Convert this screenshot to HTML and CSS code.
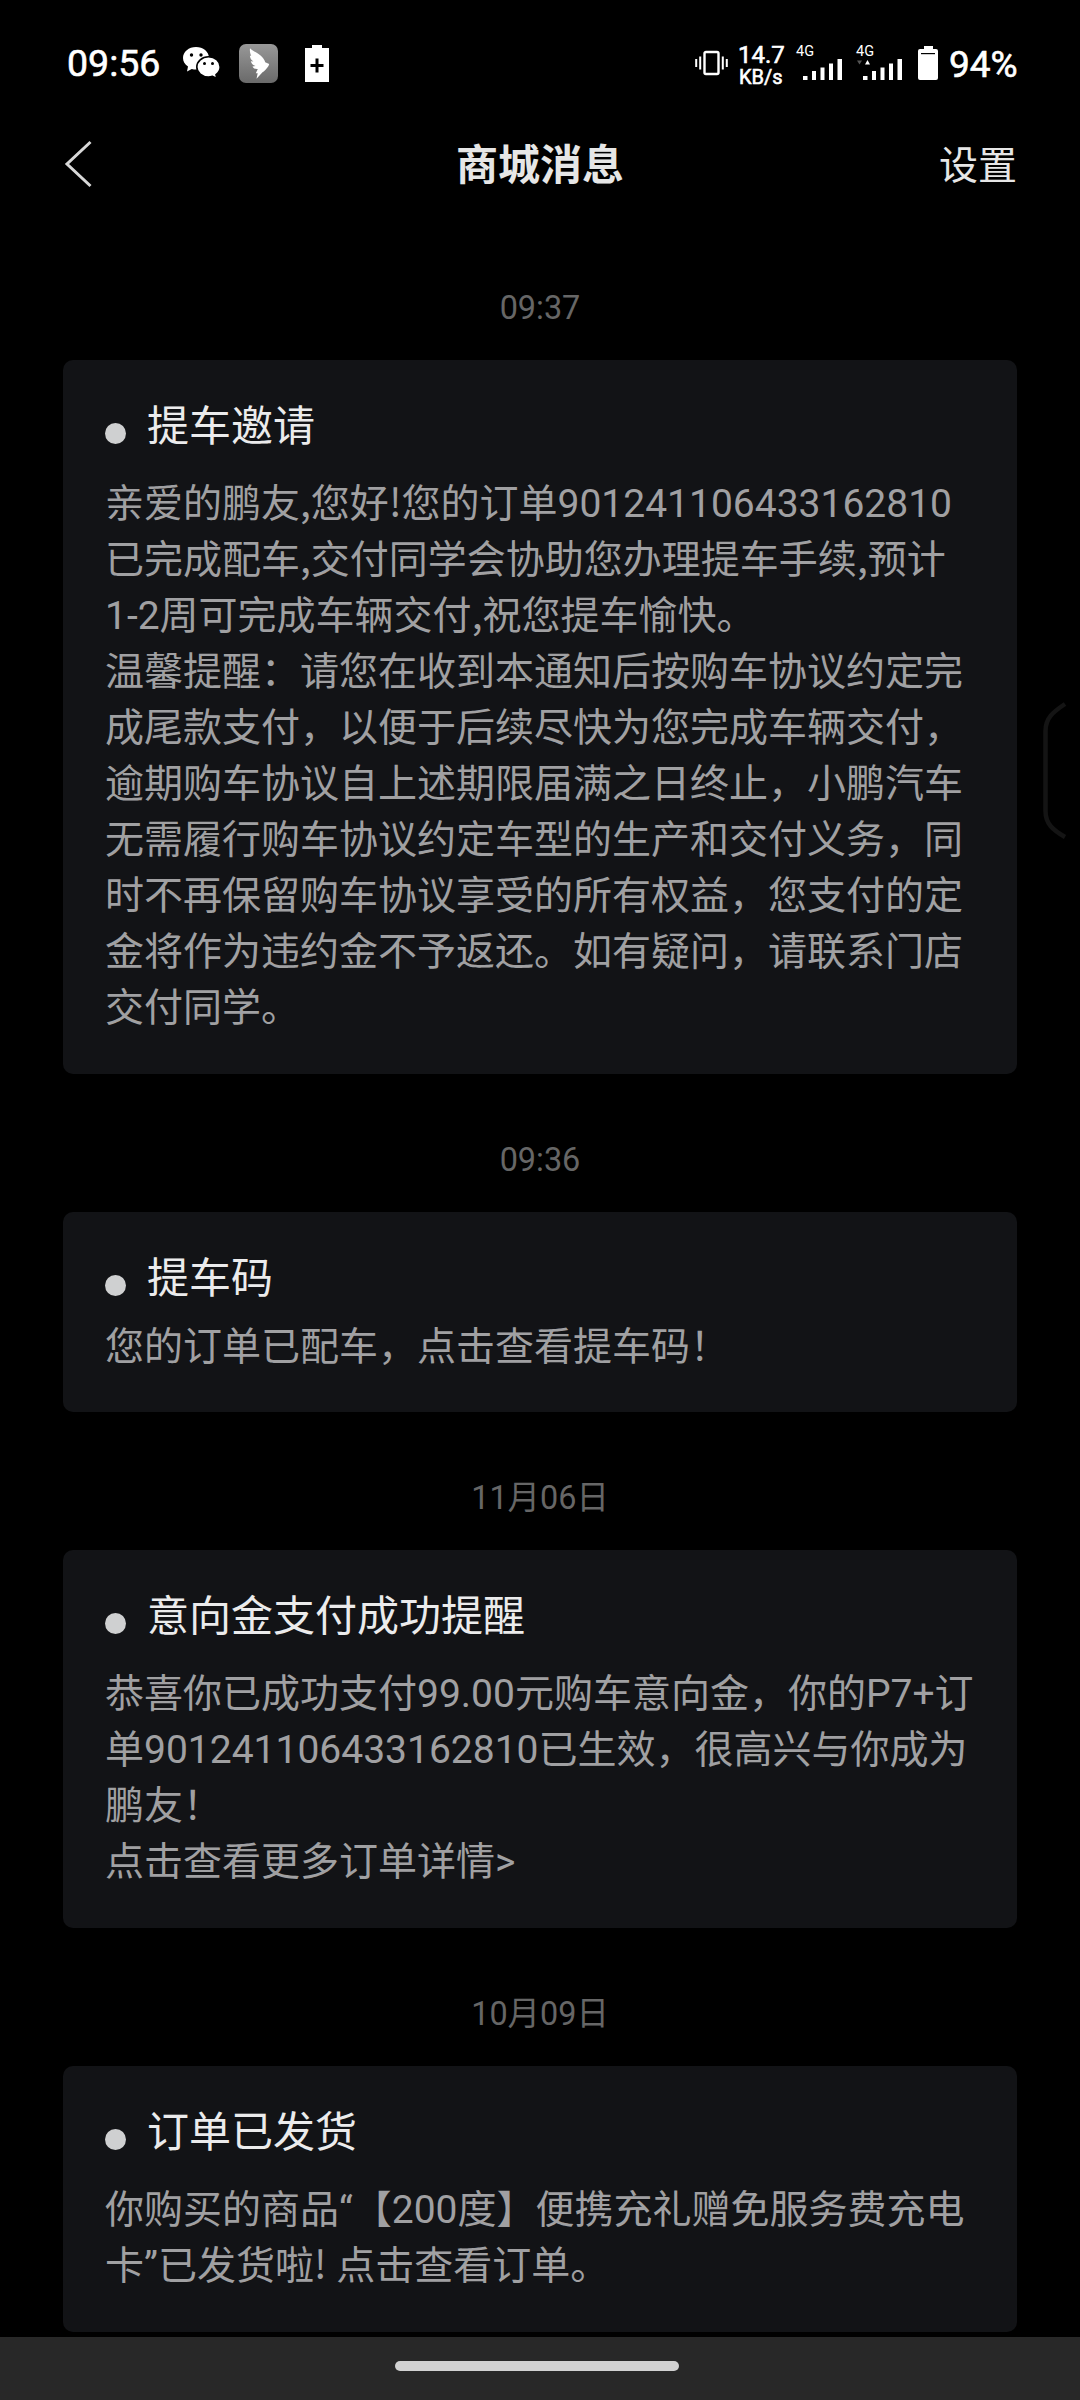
FILE: index.html
```html
<!DOCTYPE html>
<html lang="zh-CN">
<head>
<meta charset="utf-8">
<title>商城消息</title>
<link rel="stylesheet" href="styles.css">
</head>
<body>
<div class="screen">
  <div class="status">
    <span class="clock">09:56</span>
    <svg class="wechat" width="38" height="32" viewBox="0 0 38 32">
      <path fill="#fff" d="M13 0C5.800 0 0 4.800 0 11c0 3.400 1.800 6.400 5 8.600L4 24.500l4.800-2.600c1.400.4 2.800.6 4.200.6C20 22.500 26 17.500 26 11S20 0 13 0z"/>
      <path fill="#fff" stroke="#000" stroke-width="1.600" d="M25.500 9.800c6.500 0 11.700 4.500 11.700 10.200 0 3.200-1.700 5.700-4.200 7.600l.8 3.900-4.300-2.200c-1.300.4-2.600.7-4 .7-6.500 0-11.700-4.500-11.700-10S19 9.800 25.500 9.800z"/>
      <circle cx="8.500" cy="8" r="1.700"/><circle cx="18" cy="8" r="1.700"/>
      <circle cx="21.500" cy="16.500" r="1.500"/><circle cx="29.500" cy="16.500" r="1.500"/>
    </svg>
    <svg class="ding" width="39" height="39" viewBox="0 0 39 39">
      <defs><linearGradient id="g" x1="0" y1="0" x2="0" y2="1"><stop offset="0" stop-color="#989898"/><stop offset="1" stop-color="#6a6a6a"/></linearGradient></defs>
      <rect width="39" height="39" rx="7" fill="url(#g)"/>
      <path fill="#fff" d="M11 4.300C14.500 8 20 9 24 14c1.500 2 2 3.500 2.200 4.300L30.200 20c-.5 2.500-3 5-5.500 7.500l-1.200.8L17.500 34.800l1.200-5.600h-1.900l2-4.200c-2.500.2-4.300-.6-5.300-2.500l3-.4c-2.500-.8-4.200-2.500-4.700-4.800l2.600.2c-2.200-1.500-3.400-3.500-3.500-6l1.300.4C10.900 9 10.700 6.500 11 4.300z"/>
    </svg>
    <svg class="saver" width="24" height="37" viewBox="0 0 24 37">
      <path fill="#fff" d="M7 0h10v3h7v34H0V3h7z"/><path d="M10.500 13.500h3v5.500h5v3h-5v5.500h-3V22h-5v-3h5z"/>
    </svg>
    <div class="status-right">
      <svg class="vibrate" width="33" height="26" viewBox="0 0 33 26">
        <rect x="9.500" y="2" width="14" height="22" rx="1.500" fill="none" stroke="#fff" stroke-width="2.400"/>
        <path stroke="#fff" stroke-width="2" d="M1.200 9v8M5.200 6.500v13M27.800 6.500v13M31.800 9v8"/>
      </svg>
      <div class="speed"><span class="rate">14.7</span><span class="unit">KB/s</span></div>
      <div class="signal"><span>4G</span>
        <svg width="40" height="21" viewBox="0 0 40 21"><path fill="#fff" d="M0 17h4.500v4H0zM9 12h4v9H9zM17.500 8.500h4V21h-4zM26 4.500h4V21h-4zM34.500 0H39v21h-4.500z"/></svg>
      </div>
      <div class="signal"><span>4G</span>
        <svg width="47" height="21" viewBox="0 0 47 21"><path fill="#fff" d="M7 17h4.500v4H7zM16 12h4v9h-4zM24.500 8.500h4V21h-4zM33 4.500h4V21h-4zM41.500 0H46v21h-4.500zM9 5.500h5L11.500 1z"/><path fill="#555" d="M1 1.500h5L3.500 5.500z"/></svg>
      </div>
      <svg class="battery" width="20" height="34" viewBox="0 0 20 34">
        <path fill="#fff" d="M6 0h9v3h3a2 2 0 0 1 2 2v27a2 2 0 0 1-2 2H2a2 2 0 0 1-2-2V5a2 2 0 0 1 2-2h4z"/><path d="M3 7h14v1.200H3z"/>
      </svg>
      <span class="percent">94%</span>
    </div>
  </div>

  <header class="header">
    <svg class="back" width="30" height="48" viewBox="0 0 30 48"><path d="M27.500 2 4 24l23.500 22" fill="none" stroke="#d8d8d8" stroke-width="3"/></svg>
    <h1>商城消息</h1>
    <span class="settings">设置</span>
  </header>

  <main class="list">
    <div class="time">09:37</div>
    <section class="card">
      <h2><i class="dot"></i>提车邀请</h2>
      <p>亲爱的鹏友<span class="punct">,</span>您好<span class="punct">!</span>您的订单901241106433162810<br>已完成配车<span class="punct">,</span>交付同学会协助您办理提车手续<span class="punct">,</span>预计<br>1-2周可完成车辆交付<span class="punct">,</span>祝您提车愉快。<br>温馨提醒：请您在收到本通知后按购车协议约定完成尾款支付，以便于后续尽快为您完成车辆交付，逾期购车协议自上述期限届满之日终止，小鹏汽车无需履行购车协议约定车型的生产和交付义务，同时不再保留购车协议享受的所有权益，您支付的定金将作为违约金不予返还。如有疑问，请联系门店交付同学。</p>
    </section>
    <div class="time">09:36</div>
    <section class="card single">
      <h2><i class="dot"></i>提车码</h2>
      <p>您的订单已配车，点击查看提车码！</p>
    </section>
    <div class="time">11月06日</div>
    <section class="card">
      <h2><i class="dot"></i>意向金支付成功提醒</h2>
      <p>恭喜你已成功支付99.00元购车意向金，你的P7+订<br>单901241106433162810已生效，很高兴与你成为<br>鹏友！<br>点击查看更多订单详情&gt;</p>
    </section>
    <div class="time">10月09日</div>
    <section class="card">
      <h2><i class="dot"></i>订单已发货</h2>
      <p>你购买的商品“【200度】便携充礼赠免服务费充电<br>卡”已发货啦<span class="punct">!</span> 点击查看订单。</p>
    </section>
  </main>

  <footer class="navbar"><div class="pill"></div></footer>
  <svg class="edge" width="28" height="140" viewBox="0 0 28 140"><path d="M24 3C12 11 4.500 17 4.500 30v80c0 13 7.500 19 19.500 26" fill="none" stroke="#141414" stroke-width="4.500"/></svg>
</div>
</body>
</html>
```
FILE: styles.css
```css
* { box-sizing: border-box; }
body {
  margin: 0;
  background: #000;
  font-family: Roboto, "Noto Sans CJK SC", sans-serif;
  text-spacing-trim: space-all;
  text-autospace: no-autospace;
}
svg { display: block; flex: none; }
.screen {
  position: relative;
  display: flex;
  flex-direction: column;
  width: 1080px;
  height: 2400px;
  overflow: hidden;
}

.status {
  display: flex;
  align-items: center;
  height: 126px;
  padding: 0 63px 0 67px;
  color: #fff;
  -webkit-text-stroke: 0.6px #fff;
}
.clock { font-size: 37.500px; width: 116px; }
.wechat { margin-right: 18px; }
.ding { margin-right: 27px; }
.status-right { display: flex; align-items: center; margin-left: auto; }
.vibrate { margin-right: 10px; }
.speed { display: flex; flex-direction: column; width: 58px; padding-top: 3px; }
.rate { font-size: 24px; line-height: 24px; }
.unit { font-size: 20px; line-height: 20px; margin-left: 1px; }
.signal { display: flex; flex-direction: column; width: 60px; height: 36px; }
.signal span { font-size: 14.500px; line-height: 14px; -webkit-text-stroke: 0; }
.signal svg { margin-left: 7px; }
.signal + .signal svg { margin-left: 0; }
.battery { margin: 0 11px 0 2px; }
.percent { font-size: 37px; width: 68px; padding-top: 2px; white-space: nowrap; }

.header {
  display: grid;
  grid-template-columns: 1fr auto 1fr;
  align-items: center;
  height: 76px;
  padding: 0 63px;
  color: #e6e6e6;
}
.header h1 { margin: 0; padding-top: 3px; font-size: 42px; line-height: 60px; font-weight: 700; }
.settings { justify-self: end; padding-top: 3px; font-size: 39px; line-height: 60px; }

.list { flex: 1; padding: 20px 63px 0; }
.time {
  height: 138px;
  padding-top: 66px;
  text-align: center;
  font-size: 32.400px;
  line-height: 40px;
  color: #666;
}
.card {
  padding: 37px 40px 38px 42px;
  border-radius: 10px;
  background: #121316;
}
.card h2 {
  display: flex;
  align-items: center;
  gap: 21px;
  margin: 0 0 19px;
  font-size: 42px;
  line-height: 60px;
  font-weight: 400;
  color: #ebebec;
}
.dot {
  width: 21px;
  height: 21px;
  margin-top: 12px;
  border-radius: 50%;
  background: #cfd0d1;
}
.card p { margin: 0; font-size: 39px; line-height: 56px; color: #a0a0a2; }
.punct { font-family: "Noto Sans CJK SC", sans-serif; line-height: 1; }
.single { padding-bottom: 42px; }
.single h2 { margin-bottom: 15px; }
.single p { line-height: 46px; }

.navbar {
  display: flex;
  justify-content: center;
  height: 63px;
  padding: 24px 6px 0 0;
  background: #282828;
}
.pill { width: 284px; height: 10px; border-radius: 5px; background: #d2d2d2; }
.edge { position: absolute; left: 1041px; top: 701px; }
```
